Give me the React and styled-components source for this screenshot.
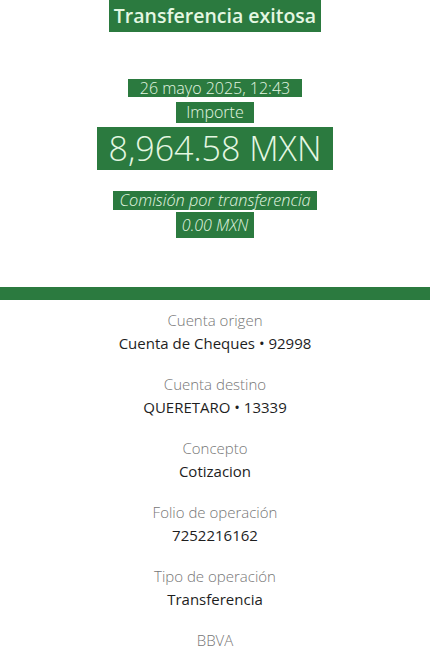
import React from "react";
import styled, { createGlobalStyle } from "styled-components";

const Global = createGlobalStyle`
  body {
    margin: 0;
    background: #ffffff;
    font-family: "Open Sans", "Lato", sans-serif;
  }
`;

const GREEN = "#2b7a3f";

const Page = styled.div`
  width: 430px;
  min-height: 661px;
  background: #fff;
  overflow: hidden;
`;

const Header = styled.div`
  display: flex;
  flex-direction: column;
  align-items: center;
  padding-bottom: 49px;
`;

const Line = styled.div`
  display: flex;
  justify-content: center;
  margin-top: ${(p) => p.$mt || 0}px;
`;

const Mark = styled.span`
  display: inline-block;
  background: ${GREEN};
  color: #e4f7e2;
  padding: 0 ${(p) => p.$px || 5}px;
  height: ${(p) => p.$h}px;
  line-height: ${(p) => p.$h}px;
  font-size: ${(p) => p.$size}px;
  font-weight: ${(p) => p.$weight || 300};
  font-style: ${(p) => (p.$italic ? "italic" : "normal")};
  white-space: nowrap;
`;

const Band = styled.div`
  height: 13px;
  background: ${GREEN};
`;

const Details = styled.div`
  display: flex;
  flex-direction: column;
  align-items: center;
  padding-top: 11px;
  gap: 23px;
`;

const Item = styled.div`
  display: flex;
  flex-direction: column;
  align-items: center;
  gap: 5px;
`;

const Label = styled.div`
  font-size: 15px;
  font-weight: 300;
  color: #767676;
  line-height: 18px;
`;

const Value = styled.div`
  font-size: 15px;
  font-weight: 400;
  color: #1e1e1e;
  line-height: 18px;
`;

const rows = [
  ["Cuenta origen", "Cuenta de Cheques • 92998"],
  ["Cuenta destino", "QUERETARO • 13339"],
  ["Concepto", "Cotizacion"],
  ["Folio de operación", "7252216162"],
  ["Tipo de operación", "Transferencia"],
];

export default function App() {
  return (
    <Page>
      <Global />
      <Header>
        <Line>
          <Mark $h={32} $size={19.5} $weight={600} $px={5}>Transferencia exitosa</Mark>
        </Line>
        <Line $mt={47}>
          <Mark $h={18} $size={16} $px={12}>26 mayo 2025, 12:43</Mark>
        </Line>
        <Line $mt={5}>
          <Mark $h={21} $size={16} $px={10}>Importe</Mark>
        </Line>
        <Line $mt={4}>
          <Mark $h={43} $size={34} $px={12}>8,964.58 MXN</Mark>
        </Line>
        <Line $mt={21}>
          <Mark $h={19} $size={16.3} $italic $px={6}>Comisión por transferencia</Mark>
        </Line>
        <Line $mt={2}>
          <Mark $h={26} $size={16} $italic $px={6}>0.00 MXN</Mark>
        </Line>
      </Header>
      <Band />
      <Details>
        {rows.map(([l, v]) => (
          <Item key={l}>
            <Label>{l}</Label>
            <Value>{v}</Value>
          </Item>
        ))}
        <Item>
          <Label>BBVA</Label>
        </Item>
      </Details>
    </Page>
  );
}
